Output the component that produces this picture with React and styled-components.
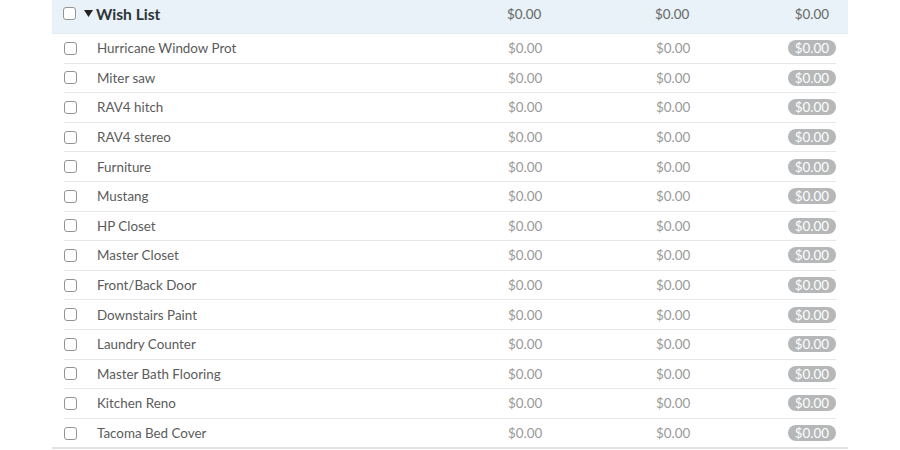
import React from 'react'
import styled, { createGlobalStyle } from 'styled-components'

const GlobalStyle = createGlobalStyle`
  html, body {
    margin: 0;
    padding: 0;
    background: #fff;
    font-family: Lato, "Open Sans", "Liberation Sans", sans-serif;
  }
`

const ITEMS = [
    'Hurricane Window Prot',
    'Miter saw',
    'RAV4 hitch',
    'RAV4 stereo',
    'Furniture',
    'Mustang',
    'HP Closet',
    'Master Closet',
    'Front/Back Door',
    'Downstairs Paint',
    'Laundry Counter',
    'Master Bath Flooring',
    'Kitchen Reno',
    'Tacoma Bed Cover',
]

const Table = styled.div`
    width: 796px;
    margin-left: 52px;
    border-bottom: 2px solid #e2e2e2;
`

const HeaderRow = styled.div`
    display: grid;
    grid-template-columns: 21px 12px 411px 148px 1fr auto;
    align-items: center;
    height: 27px;
    padding: 0 19px 6px 11px;
    background: #e8f2f8;
    border-bottom: 1px solid #e3ecf1;
`

const Body = styled.div`
    margin: 0 12px;
`

const Row = styled.div`
    display: grid;
    grid-template-columns: 33px 411px 148px 1fr auto;
    align-items: center;
    height: 28.6px;
    border-bottom: ${(props) => (props.last ? 'none' : '1px solid #e6e6e6')};
`

const Check = styled.input.attrs({ type: 'checkbox' })`
    appearance: none;
    box-sizing: border-box;
    width: 13px;
    height: 13px;
    margin: 0;
    border: 1px solid #949494;
    border-radius: 3px;
    background: #fff;
`

const Caret = styled.svg`
    display: block;
    width: 9px;
    height: 7px;
`

const Title = styled.span`
    font-size: 15.6px;
    font-weight: 700;
    color: #2f3437;
`

const Name = styled.span`
    font-size: 13.4px;
    color: #5b5b5b;
    white-space: nowrap;
`

const Amount = styled.span`
    font-size: 13.4px;
    color: ${(props) => (props.head ? '#666' : '#999')};
    text-align: ${(props) => (props.right ? 'right' : 'left')};
`

const Pill = styled.span`
    display: inline-block;
    height: 16px;
    line-height: 16px;
    padding: 0 7px;
    border-radius: 8px;
    background: #b5b7b8;
    color: #fff;
    font-size: 13.4px;
`

const App = () => {
    return (
        <>
            <GlobalStyle />
            <Table>
                <HeaderRow>
                    <Check />
                    <Caret viewBox="0 0 9 7">
                        <polygon points="0,0 9,0 4.5,7" fill="#222" />
                    </Caret>
                    <Title>Wish List</Title>
                    <Amount head>$0.00</Amount>
                    <Amount head>$0.00</Amount>
                    <Amount head right>$0.00</Amount>
                </HeaderRow>
                <Body>
                    {ITEMS.map((item, i) => (
                        <Row key={item} last={i === ITEMS.length - 1}>
                            <Check />
                            <Name>{item}</Name>
                            <Amount>$0.00</Amount>
                            <Amount>$0.00</Amount>
                            <Pill>$0.00</Pill>
                        </Row>
                    ))}
                </Body>
            </Table>
        </>
    )
}

export default App
